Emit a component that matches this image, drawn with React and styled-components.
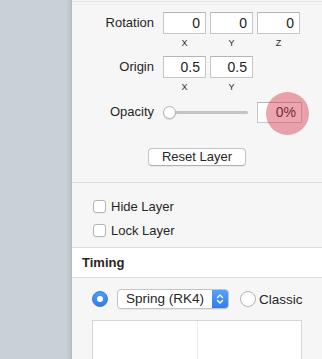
import styled, { createGlobalStyle } from 'styled-components';

const GlobalStyle = createGlobalStyle`
    html, body {
        margin: 0;
        padding: 0;
        overflow: hidden;
    }
    body {
        font-family: "Liberation Sans", Arial, sans-serif;
        font-size: 13px;
        color: #262626;
    }
`;

const Page = styled.div`
    display: flex;
    width: 322px;
    height: 359px;
    overflow: hidden;
`;

const Sidebar = styled.div`
    width: 71px;
    flex-shrink: 0;
    background: #c9d0d7;
    box-shadow: inset -6px 0 5px -4px rgba(0, 0, 0, 0.08);
`;

const Panel = styled.div`
    flex: 1;
    background: #f6f6f6;
    border-left: 1px solid #b6bbc1;
`;

const TopEdge = styled.div`
    height: 2px;
    margin-top: 1px;
    border-top: 1px solid #e6e6e6;
    border-bottom: 1px solid #ededed;
`;

const Section = styled.div`
    display: flex;
    flex-direction: column;
    padding: ${(props) => props.$padding};
    gap: ${(props) => props.$gap || 0}px;
    border-bottom: ${(props) => (props.$divider ? '1px solid #dcdcdc' : 'none')};
`;

const FieldRow = styled.div`
    display: flex;
    align-items: ${(props) => (props.$center ? 'center' : 'flex-start')};
    margin-top: ${(props) => props.$top || 0}px;
`;

const FieldLabel = styled.div`
    width: 82px;
    margin-right: 9px;
    text-align: right;
    line-height: 22px;
`;

const InputGroup = styled.div`
    display: flex;
    gap: 4px;
`;

const AxisField = styled.div`
    display: flex;
    flex-direction: column;
    align-items: center;
`;

const NumberBox = styled.div`
    box-sizing: border-box;
    width: ${(props) => props.$width || 43}px;
    height: ${(props) => props.$height || 22}px;
    padding-right: 5px;
    background: #fff;
    border: 1px solid #c6c6c6;
    border-top-color: #b4b4b4;
    text-align: right;
    line-height: ${(props) => (props.$height || 22) - 2}px;
    font-size: 14px;
    color: #222;
`;

const AxisLabel = styled.div`
    margin-top: 4px;
    font-size: 9px;
    line-height: 10px;
    color: #2a2a2a;
`;

const Slider = styled.div`
    position: relative;
    width: 85px;
    height: 13px;
    margin-right: 9px;
    display: flex;
    align-items: center;
`;

const Track = styled.div`
    width: 100%;
    height: 3px;
    border-radius: 2px;
    background: #c4c4c4;
`;

const Knob = styled.div`
    position: absolute;
    left: 0;
    top: 0;
    box-sizing: border-box;
    width: 13px;
    height: 13px;
    border-radius: 50%;
    background: #fff;
    border: 1px solid #b2b2b2;
    box-shadow: 0 1px 1px rgba(0, 0, 0, 0.12);
`;

const OpacityWrap = styled.div`
    position: relative;
`;

const TouchMark = styled.div`
    position: absolute;
    left: 9px;
    top: -10px;
    width: 43px;
    height: 43px;
    border-radius: 50%;
    background: rgba(214, 58, 80, 0.45);
`;

const ButtonRow = styled.div`
    display: flex;
    justify-content: center;
    margin-top: 25px;
`;

const PushButton = styled.button`
    box-sizing: border-box;
    width: 98px;
    height: 18px;
    padding: 0;
    font-family: inherit;
    font-size: 13px;
    line-height: 16px;
    color: #262626;
    background: #fff;
    border: 1px solid #c4c4c4;
    border-bottom-color: #b0b0b0;
    border-radius: 4px;
    box-shadow: 0 1px 1px rgba(0, 0, 0, 0.05);
`;

const CheckRow = styled.label`
    display: flex;
    align-items: center;
    gap: 5px;
    height: 13px;
    line-height: 13px;
`;

const CheckBox = styled.span`
    box-sizing: border-box;
    width: 13px;
    height: 13px;
    border-radius: 3px;
    background: #fff;
    border: 1px solid #b4b4b4;
    box-shadow: 0 1px 0 rgba(0, 0, 0, 0.04);
`;

const SectionHeader = styled.div`
    height: 29px;
    padding-left: 10px;
    display: flex;
    align-items: center;
    background: #fff;
    border-top: 1px solid #dcdcdc;
    border-bottom: 1px solid #dcdcdc;
    font-weight: bold;
    margin-top: -1px;
`;

const OptionRow = styled.div`
    display: flex;
    align-items: center;
    height: 20px;
`;

const Radio = styled.span`
    box-sizing: border-box;
    width: 16px;
    height: 16px;
    border-radius: 50%;
    display: flex;
    align-items: center;
    justify-content: center;
    background: ${(props) => (props.$checked ? 'linear-gradient(#4f9cf6, #2f7fe9)' : '#fff')};
    border: 1px solid ${(props) => (props.$checked ? '#2f7ae0' : '#b4b4b4')};
    margin-right: ${(props) => props.$gap || 0}px;
    &::after {
        content: '';
        display: ${(props) => (props.$checked ? 'block' : 'none')};
        width: 6px;
        height: 6px;
        border-radius: 50%;
        background: #fff;
    }
`;

const PopUp = styled.div`
    box-sizing: border-box;
    width: 112px;
    height: 20px;
    margin-right: 11px;
    display: flex;
    background: #fff;
    border: 1px solid #c4c4c4;
    border-radius: 4px;
    box-shadow: 0 1px 1px rgba(0, 0, 0, 0.06);
    overflow: hidden;
`;

const PopUpText = styled.div`
    flex: 1;
    padding-left: 8px;
    line-height: 18px;
    font-size: 13.5px;
`;

const Stepper = styled.div`
    width: 16px;
    display: flex;
    align-items: center;
    justify-content: center;
    background: linear-gradient(#5aa2f7, #2f7de8);
`;

const RadioText = styled.span`
    font-size: 13.5px;
`;

const Graph = styled.div`
    box-sizing: border-box;
    margin-top: 11px;
    width: 210px;
    height: 60px;
    flex-shrink: 0;
    display: flex;
    background: #fff;
    border: 1px solid #d6d6d6;
`;

const GraphHalf = styled.div`
    flex: 1;
    border-left: ${(props) => (props.$line ? '1px solid #e8edf2' : 'none')};
`;

function Field({ value, axis }) {
    return (
        <AxisField>
            <NumberBox>{value}</NumberBox>
            {axis && <AxisLabel>{axis}</AxisLabel>}
        </AxisField>
    );
}

export default function App() {
    return (
        <>
            <GlobalStyle />
            <Page>
                <Sidebar />
                <Panel>
                    <TopEdge />
                    <Section $padding="7px 0 16px 0" $divider>
                        <FieldRow>
                            <FieldLabel>Rotation</FieldLabel>
                            <InputGroup>
                                <Field value="0" axis="X" />
                                <Field value="0" axis="Y" />
                                <Field value="0" axis="Z" />
                            </InputGroup>
                        </FieldRow>
                        <FieldRow $top={8}>
                            <FieldLabel>Origin</FieldLabel>
                            <InputGroup>
                                <Field value="0.5" axis="X" />
                                <Field value="0.5" axis="Y" />
                            </InputGroup>
                        </FieldRow>
                        <FieldRow $top={9} $center>
                            <FieldLabel>Opacity</FieldLabel>
                            <Slider>
                                <Track />
                                <Knob />
                            </Slider>
                            <OpacityWrap>
                                <NumberBox $width={45} $height={21}>0%</NumberBox>
                                <TouchMark />
                            </OpacityWrap>
                        </FieldRow>
                        <ButtonRow>
                            <PushButton>Reset Layer</PushButton>
                        </ButtonRow>
                    </Section>
                    <Section $padding="17px 0 11px 21px" $gap={11}>
                        <CheckRow>
                            <CheckBox />
                            Hide Layer
                        </CheckRow>
                        <CheckRow>
                            <CheckBox />
                            Lock Layer
                        </CheckRow>
                    </Section>
                    <SectionHeader>Timing</SectionHeader>
                    <Section $padding="11px 0 0 20px">
                        <OptionRow>
                            <Radio $checked $gap={9} />
                            <PopUp>
                                <PopUpText>Spring (RK4)</PopUpText>
                                <Stepper>
                                    <svg width="8" height="12" viewBox="0 0 8 12">
                                        <path d="M1.5 4.5 L4 2 L6.5 4.5 M1.5 7.5 L4 10 L6.5 7.5" fill="none" stroke="#fff" strokeWidth="1.4" strokeLinecap="round" strokeLinejoin="round" />
                                    </svg>
                                </Stepper>
                            </PopUp>
                            <Radio $gap={3} />
                            <RadioText>Classic</RadioText>
                        </OptionRow>
                        <Graph>
                            <GraphHalf />
                            <GraphHalf $line />
                        </Graph>
                    </Section>
                </Panel>
            </Page>
        </>
    );
}
